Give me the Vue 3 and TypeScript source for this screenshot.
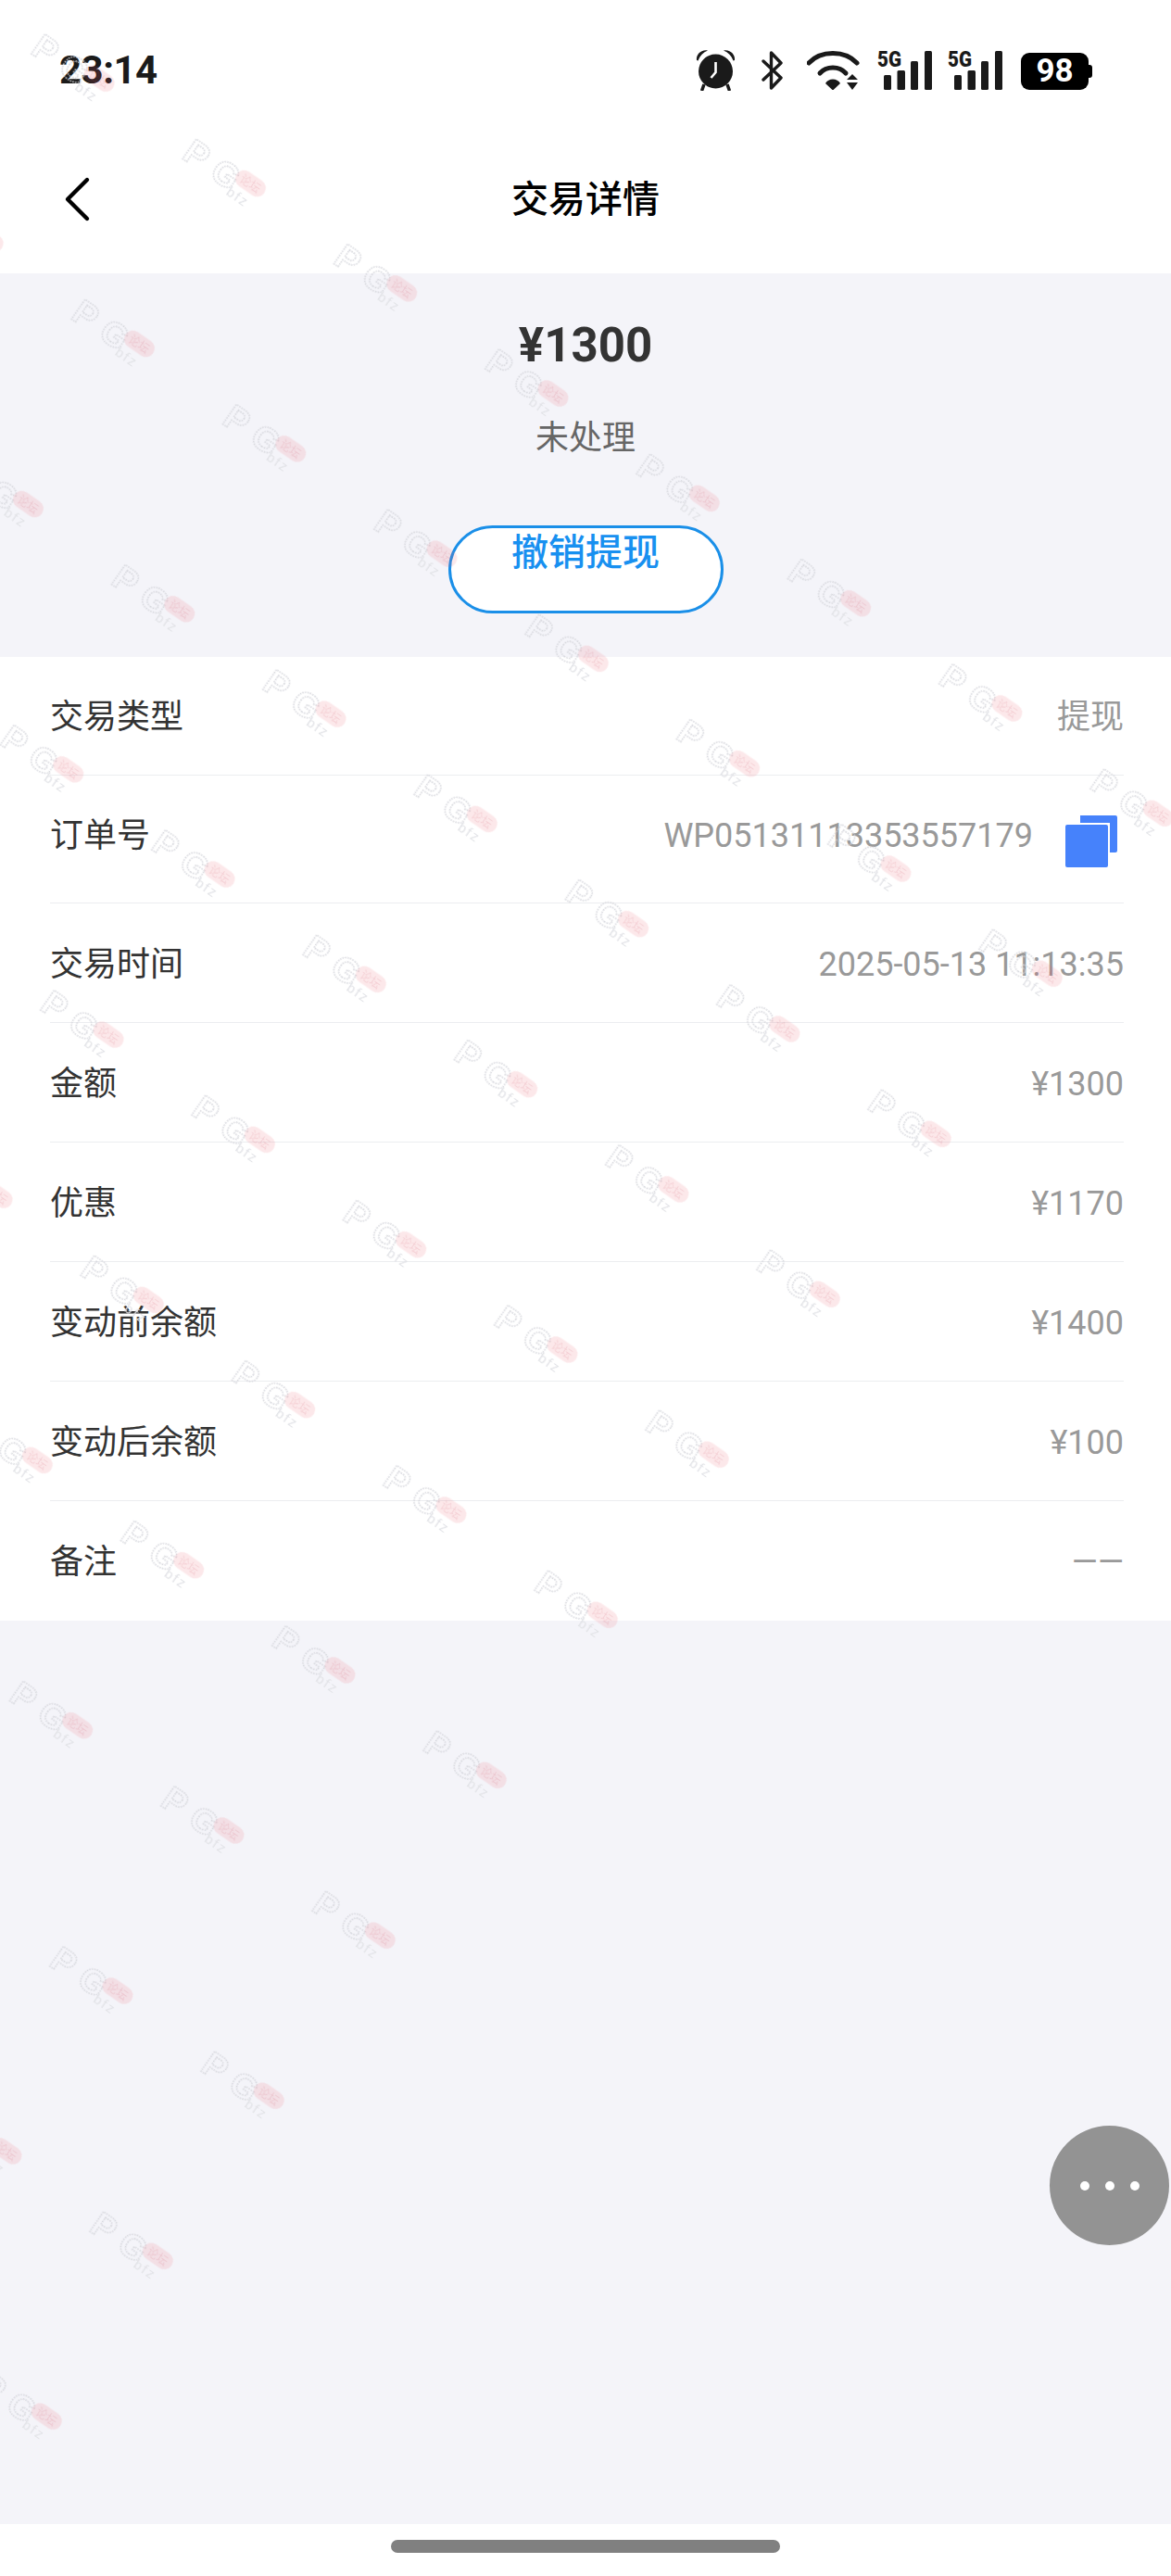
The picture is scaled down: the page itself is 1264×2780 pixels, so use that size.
<template>
  <div class="page">
    <div class="status-bar">
      <span class="time">23:14</span>
      <div class="status-icons">
        <svg class="ic-alarm" width="43" height="45" viewBox="0 0 43 45">
          <circle cx="21.5" cy="24" r="18.5" fill="#1a1a1a" />
          <path d="M1 12C0 6 6 0 13 1.5 8 3.5 4.5 7 2.5 12.5Z" fill="#1a1a1a" />
          <path d="M42 12C43 6 37 0 30 1.5 35 3.5 38.5 7 40.5 12.5Z" fill="#1a1a1a" />
          <path d="M9 38 6.5 45M34 38l2.5 7" stroke="#1a1a1a" stroke-width="3.5" />
          <path d="M21.5 14v11l-5 6" fill="none" stroke="#fff" stroke-width="2.6" />
        </svg>
        <svg class="ic-bt" width="25" height="42" viewBox="0 0 25 42">
          <path
            d="M3 11 22 29 11.5 40V2L22 13 3 31"
            fill="none"
            stroke="#1a1a1a"
            stroke-width="3.4"
            stroke-linejoin="round"
            stroke-linecap="round"
          />
        </svg>
        <svg class="ic-wifi" width="60" height="42" viewBox="0 0 60 42">
          <path d="M2 13C15 -1 41 -1 54 13" fill="none" stroke="#1a1a1a" stroke-width="5" stroke-linecap="round" />
          <path d="M14 24C21 16 35 16 42 24" fill="none" stroke="#1a1a1a" stroke-width="5" stroke-linecap="round" />
          <path d="M20 35C23 29 33 29 36 35L28 42.5Z" fill="#1a1a1a" />
          <path d="M49 25 55 31H43ZM43 34H55L49 42Z" fill="#1a1a1a" />
        </svg>
        <svg v-for="n in 2" :key="n" class="ic-signal" width="59" height="51" viewBox="0 -8 59 51">
          <text x="0" y="18" class="five-g" textLength="26" lengthAdjust="spacingAndGlyphs">5G</text>
          <rect x="7" y="27" width="8" height="16" rx="1.5" fill="#1a1a1a" />
          <rect x="21.5" y="22" width="8.5" height="21" rx="1.5" fill="#1a1a1a" />
          <rect x="36" y="12" width="8" height="31" rx="1.5" fill="#1a1a1a" />
          <rect x="51" y="1" width="8" height="42" rx="1.5" fill="#1a1a1a" />
        </svg>
        <div class="battery">
          <div class="battery-body">98</div>
          <div class="battery-nub"></div>
        </div>
      </div>
    </div>

    <div class="nav">
      <svg class="back" width="32" height="52" viewBox="0 0 32 52">
        <path d="M26 5 5 26l21 21" fill="none" stroke="#000" stroke-width="4.4" stroke-linecap="round" stroke-linejoin="round" />
      </svg>
      <span class="nav-title">交易详情</span>
    </div>

    <div class="summary">
      <div class="amount">¥1300</div>
      <div class="state">未处理</div>
      <button class="cancel-btn">撤销提现</button>
    </div>

    <div class="list">
      <div v-for="row in rows" :key="row.label" class="row" :class="{ 'row-order': row.copy }">
        <span class="label">{{ row.label }}</span>
        <div class="value-wrap">
          <span class="value">{{ row.value }}</span>
          <svg v-if="row.copy" class="copy" width="56" height="56" viewBox="0 0 56 56">
            <path d="M16 0H54a2 2 0 0 1 2 2V38a2 2 0 0 1-2 2H48V8H16Z" fill="#4682fb" />
            <rect x="0" y="10" width="46" height="46" rx="2" fill="#4682fb" />
          </svg>
        </div>
      </div>
    </div>

    <div class="rest"></div>
    <div class="home-area"><div class="home-bar"></div></div>

    <!-- forum watermark: one rotated tile sheet, so only part of the screen is covered -->
    <svg class="watermark" width="1264" height="2724">
      <defs>
        <pattern
          id="wm"
          patternUnits="userSpaceOnUse"
          width="199"
          height="210"
          patternTransform="matrix(0.8206 0.5693 -0.5714 0.8238 11 658)"
        >
          <text x="72" y="125" class="wm-letter">P</text>
          <text x="108" y="125" class="wm-letter">G</text>
          <rect x="132" y="96" width="36" height="19" rx="9.5" class="wm-pill" />
          <text x="150" y="110" class="wm-pill-text">论坛</text>
          <text x="134" y="130" class="wm-small">bfz</text>
        </pattern>
      </defs>
      <polygon points="1351,819 -1915,-1447 -5515,3743 -2249,6009" fill="url(#wm)" />
    </svg>

    <div class="fab">
      <i></i>
      <i></i>
      <i></i>
    </div>
  </div>
</template>

<script setup lang="ts">
interface Row {
  label: string
  value: string
  copy?: boolean
}

const rows: Row[] = [
  { label: '交易类型', value: '提现' },
  { label: '订单号', value: 'WP05131113353557179', copy: true },
  { label: '交易时间', value: '2025-05-13 11:13:35' },
  { label: '金额', value: '¥1300' },
  { label: '优惠', value: '¥1170' },
  { label: '变动前余额', value: '¥1400' },
  { label: '变动后余额', value: '¥100' },
  { label: '备注', value: '——' }
]
</script>

<style>
html,
body {
  margin: 0;
  background: #fff;
}
</style>

<style scoped>
.page {
  position: relative;
  width: 1264px;
  height: 2780px;
  overflow: hidden;
  display: flex;
  flex-direction: column;
  background: #fff;
  font-family: Roboto, 'Noto Sans CJK SC', sans-serif;
}

.status-bar {
  height: 140px;
  box-sizing: border-box;
  padding: 53px 85px 0 64px;
  display: flex;
  justify-content: space-between;
  align-items: flex-start;
}

.time {
  font-size: 42px;
  line-height: 45px;
  font-weight: 700;
  letter-spacing: -0.5px;
  color: #1a1a1a;
}

.status-icons {
  display: flex;
  align-items: flex-start;
}

.ic-bt {
  margin: 2px 0 0 27px;
}

.ic-wifi {
  margin: 2px 0 0 25px;
}

.ic-signal {
  margin: -7px 0 0 16px;
}

.ic-signal + .ic-signal {
  margin-left: 17px;
}

.five-g {
  font-family: Roboto, sans-serif;
  font-size: 24px;
  font-weight: 900;
  fill: #1a1a1a;
}

.battery {
  display: flex;
  align-items: center;
  margin: 4px 0 0 20px;
}

.battery-body {
  width: 73px;
  height: 40px;
  border-radius: 9px;
  background: #000;
  color: #fff;
  font-size: 35px;
  font-weight: 700;
  line-height: 40px;
  text-align: center;
}

.battery-nub {
  width: 4px;
  height: 14px;
  border-radius: 0 3px 3px 0;
  background: #000;
}

.nav {
  position: relative;
  height: 155px;
  display: flex;
  align-items: center;
  justify-content: center;
  padding-bottom: 3px;
  box-sizing: border-box;
}

.back {
  position: absolute;
  left: 68px;
  top: 49px;
}

.nav-title {
  font-size: 40px;
  font-weight: 500;
  color: #000;
  line-height: 56px;
}

.summary {
  height: 414px;
  box-sizing: border-box;
  padding-top: 48px;
  background: #f4f4f9;
  display: flex;
  flex-direction: column;
  align-items: center;
}

.amount {
  font-size: 51px;
  line-height: 60px;
  font-weight: 700;
  color: #333;
}

.state {
  margin-top: 45px;
  font-size: 36px;
  line-height: 50px;
  color: #666;
}

.cancel-btn {
  margin-top: 69px;
  width: 297px;
  height: 95px;
  box-sizing: border-box;
  padding: 0;
  border: 3px solid #1a8fe8;
  border-radius: 48px;
  background: #fff;
  color: #1890f0;
  font-family: inherit;
  font-size: 40px;
  font-weight: 500;
  line-height: 54px;
  display: block;
  text-align: center;
  vertical-align: top;
  padding-bottom: 40px;
}

.list {
  background: #fff;
  padding: 0 51px 0 54px;
}

.row {
  height: 129px;
  box-sizing: border-box;
  padding-top: 3px;
  display: flex;
  justify-content: space-between;
  align-items: center;
  border-bottom: 1px solid #ecedf0;
}

.row:first-child {
  height: 128px;
}

.row:last-child {
  border-bottom: none;
}

.row-order {
  height: 138px;
  padding-top: 0;
}

.row-order .label,
.row-order .value {
  margin-bottom: 8px;
}

.label {
  font-size: 36px;
  line-height: 50px;
  color: #333;
}

.value-wrap {
  display: flex;
  align-items: center;
}

.value {
  font-size: 36px;
  line-height: 50px;
  color: #999;
}

.copy {
  margin: 4px 7px 0 35px;
}

.rest {
  flex: 1;
  background: #f4f4f9;
}

.home-area {
  height: 56px;
  position: relative;
  display: flex;
  justify-content: center;
  padding-top: 17px;
  box-sizing: border-box;
}

.home-bar {
  width: 420px;
  height: 14px;
  border-radius: 7px;
  background: #808080;
}

.watermark {
  position: absolute;
  left: 0;
  top: 0;
  pointer-events: none;
}

.wm-letter {
  font-family: 'Liberation Sans', sans-serif;
  font-size: 37px;
  font-weight: 700;
  fill: none;
  stroke: #d4d5da;
  stroke-width: 1.6;
  stroke-dasharray: 1.6 1.2;
  opacity: 0.9;
}

.wm-pill {
  fill: rgba(232, 90, 105, 0.14);
}

.wm-pill-text {
  font-family: 'Noto Sans CJK SC', sans-serif;
  font-size: 12px;
  text-anchor: middle;
  fill: rgba(200, 70, 85, 0.15);
}

.wm-small {
  font-family: 'Liberation Sans', sans-serif;
  font-size: 15px;
  fill: #e2e3e7;
  letter-spacing: 2px;
}

.fab {
  position: absolute;
  left: 1133px;
  top: 2294px;
  width: 129px;
  height: 129px;
  border-radius: 50%;
  background: #939393;
  display: flex;
  align-items: center;
  justify-content: center;
  gap: 17px;
}

.fab i {
  width: 10px;
  height: 10px;
  border-radius: 50%;
  background: #fff;
}
</style>
